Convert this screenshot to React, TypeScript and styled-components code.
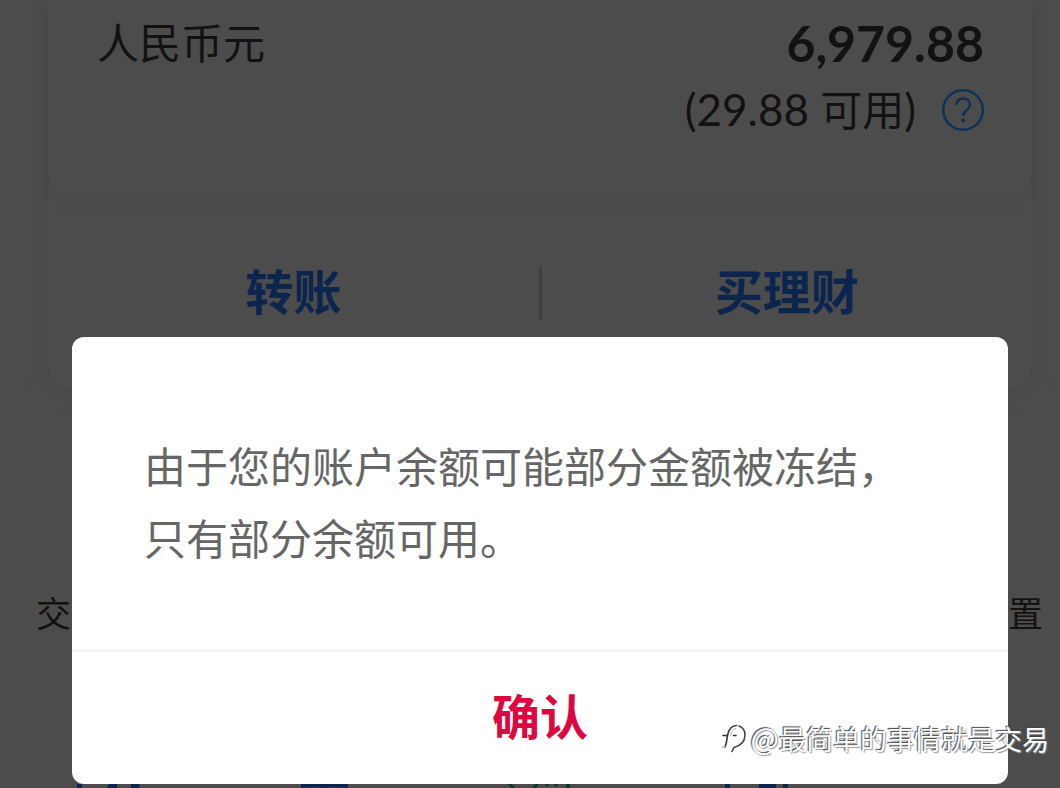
import React from "react";
import styled, { createGlobalStyle } from "styled-components";

const Global = createGlobalStyle`
  *, *::before, *::after { box-sizing: border-box; }
  body {
    margin: 0;
    background: #4c4c4c;
    color: #121212;
    font-family: "Noto Sans CJK SC", sans-serif;
  }
`;

const PlainButton = styled.button`
  padding: 0;
  border: 0;
  background: none;
  font-family: inherit;
  cursor: pointer;
`;

const Screen = styled.div`
  position: relative;
  display: flex;
  flex-direction: column;
  min-height: 100vh;
  overflow: hidden;
`;

const Account = styled.section`
  margin: 0 28px 0 48px;
  border-radius: 0 0 24px 24px;
  box-shadow: 0 0 20px #484848;
`;

const Balance = styled.div`
  display: flex;
  justify-content: space-between;
  padding: 8px 48px 58px 49px;
  border-radius: 0 0 24px 24px;
  box-shadow: 0 4px 8px #494949;
`;

const Currency = styled.div`
  font-size: 42px;
  line-height: 66px;
`;

const Amounts = styled.div`
  display: flex;
  flex-direction: column;
  align-items: flex-end;
`;

const Total = styled.div`
  font: 700 50px/70px Lato, "Noto Sans CJK SC", sans-serif;
`;

const Available = styled.div`
  display: flex;
  align-items: center;
  gap: 26px;
  font: 400 44px/62px Lato, "Noto Sans CJK SC", sans-serif;
`;

const Unit = styled.span`
  font-size: 42px;
`;

const Help = styled(PlainButton)`
  display: flex;
  color: #0b3158;
`;

const Actions = styled.div`
  display: flex;
  align-items: center;
  padding: 67px 0 69px;
`;

const Action = styled(PlainButton)`
  flex: 1;
  padding-bottom: 8px;
  color: #0b254f;
  font-size: 48px;
  font-weight: 700;
  line-height: 46px;
`;

const Divider = styled.span`
  width: 3px;
  height: 54px;
  background: #404040;
`;

const Shortcuts = styled.div`
  display: flex;
  justify-content: space-between;
  margin-top: 197px;
  padding: 0 17px 0 36px;
  font-size: 35px;
  line-height: 52px;
`;

const Menu = styled.svg`
  position: absolute;
  left: 0;
  bottom: 0;
`;

const Dialog = styled.div`
  position: absolute;
  top: 337px;
  left: 72px;
  right: 52px;
  background: #ffffff;
  border-radius: 12px;
`;

const Message = styled.p`
  margin: 0;
  padding: 92px 72px 76px;
  color: #666666;
  font-size: 42px;
  line-height: 72px;
`;

const Confirm = styled(PlainButton)`
  display: block;
  width: 100%;
  padding: 26px 0 34px;
  border-top: 3px solid #f5f5f5;
  color: #dc0840;
  font-size: 48px;
  font-weight: 700;
  line-height: 72px;
`;

const Watermark = styled.div`
  position: absolute;
  right: 11px;
  bottom: 28px;
  display: flex;
  align-items: center;
  gap: 5px;
  color: #ffffff;
  font-size: 27px;
  line-height: 42px;
  text-shadow: -1px -1px 1px #444444, 1px 1px 1px #999999;
`;

const At = styled.span`
  font-size: 30px;
`;

export default function App() {
  return (
    <Screen>
      <Global />
      <Account>
        <Balance>
          <Currency>人民币元</Currency>
          <Amounts>
            <Total>6,979.88</Total>
            <Available>
              <span>
                (29.88 <Unit>可用</Unit>)
              </span>
              <Help aria-label="余额说明">
                <svg width="42" height="42" viewBox="0 0 42 42" fill="none" stroke="currentColor" strokeWidth="2.4">
                  <circle cx="21" cy="21" r="19.8" />
                  <path d="M14.5 16c0-4 2.800-6.500 6.800-6.500s6.700 2.500 6.700 6.200c0 5.300-6.700 5.300-6.700 11.300" />
                  <circle cx="21.300" cy="31.500" r="2" fill="currentColor" stroke="none" />
                </svg>
              </Help>
            </Available>
          </Amounts>
        </Balance>
        <Actions>
          <Action>转账</Action>
          <Divider />
          <Action>买理财</Action>
        </Actions>
      </Account>
      <Shortcuts>
        <span>交</span>
        <span>置</span>
      </Shortcuts>
      <Menu width="1060" height="4" aria-hidden="true">
        <path fill="#0b254f" d="M77 0h5v4h-5zM109 0h8v4h-10zM131 0h8l1 4h-9zM301 0h47v4h-47zM725 0h5v4h-5zM759 0h17v4h-17zM783 0h5v4h-5z" />
        <path fill="#24364f" d="M306 3h17v1h-17zM326 3h17v1h-17z" />
        <path fill="#0b3b2c" d="M508 0h4l3 4h-4zM535 0h4l-3 4h-4zM545 0h4v2h-4zM554 0h4v2h-4zM566 0h4v4h-4z" />
      </Menu>
      <Dialog role="dialog" aria-modal="true">
        <Message>
          由于您的账户余额可能部分金额被冻结，
          <br />
          只有部分余额可用。
        </Message>
        <Confirm>确认</Confirm>
      </Dialog>
      <Watermark>
        <svg width="25" height="30" viewBox="0 0 25 30" fill="none" strokeLinecap="round" aria-hidden="true">
          <path stroke="#333333" strokeWidth="1.600" d="M2 12.500h4.500C8 5 11 2.500 15.500 2.500M6.500 12.500C5.500 17 6 20 4 24M12.500 12.500h2.500" />
          <path stroke="#444444" strokeWidth="1.600" d="M18 3c4 1.500 6 4.500 6 9 0 7-4 10.500-11 12.500l-2 4" />
          <path stroke="#aaaaaa" d="M1 24.500l3-1M15 5.500c-3 .5-4.500 2.500-5.500 7" />
        </svg>
        <span>
          <At>@</At>最简单的事情就是交易
        </span>
      </Watermark>
    </Screen>
  );
}
